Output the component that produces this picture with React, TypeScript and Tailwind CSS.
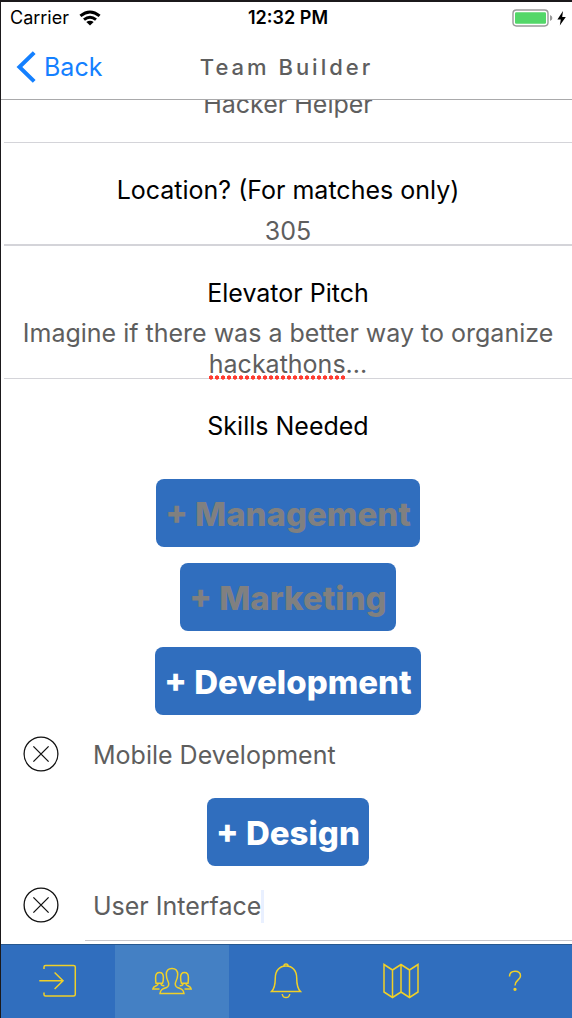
import { useState, type ReactNode } from "react";

const fieldText = "text-[25px] leading-[31px] text-[#5e5e5e]";

function Heading({ htmlFor, children }: { htmlFor?: string; children: ReactNode }) {
  const cls = "block text-center text-[25px] leading-[31px] text-black";
  return htmlFor ? (
    <label htmlFor={htmlFor} className={cls}>{children}</label>
  ) : (
    <h2 className={cls}>{children}</h2>
  );
}

function StatusBar() {
  return (
    <div className="grid h-8 grid-cols-3 items-center pr-1.5 pl-[9px] text-[18px] leading-5 text-black">
      <div className="flex items-center gap-2.5">
        <span>Carrier</span>
        <svg viewBox="0 0 22 16" className="h-4 w-[22px]" fill="none" stroke="#000" strokeWidth="3" aria-hidden="true">
          <path d="M1.4 5.9Q11 -1.9 20.6 5.9" />
          <path d="M5 9.6Q11 4.8 17 9.6" />
          <path d="M7.3 12.1Q11 9.2 14.7 12.1L11 15.6Z" fill="#000" stroke="none" />
        </svg>
      </div>
      <span className="text-center font-semibold">12:32 PM</span>
      <div className="flex items-center justify-end gap-1">
        <svg viewBox="0 0 41 18" className="h-[18px] w-[41px]" aria-hidden="true">
          <rect x="1" y="1" width="35" height="16" rx="3.4" fill="none" stroke="#9a9a9a" strokeWidth="1.4" />
          <rect x="3" y="3.2" width="31" height="11.6" rx="1.2" fill="#53d769" />
          <path d="M38 6Q40.4 7 40.4 9T38 12Z" fill="#9a9a9a" />
        </svg>
        <svg viewBox="0 0 9 15" className="h-[15px] w-[9px]" aria-hidden="true">
          <path d="M6 0L.4 8.4H3.8L2.8 14.6L8.8 6H5.2Z" fill="#000" />
        </svg>
      </div>
    </div>
  );
}

function NavBar() {
  return (
    <div className="grid h-[66px] grid-cols-[1fr_auto_1fr] items-center border-b border-[#a9a9ab] px-[15px]">
      <button type="button" className="flex items-center gap-2 justify-self-start text-[25px] leading-8 text-[#1480ff]">
        <svg viewBox="0 0 20 32" className="h-8 w-5" fill="none" stroke="currentColor" strokeWidth="4" aria-hidden="true">
          <path d="M18.2 1.6L3.4 16L18.2 30.4" />
        </svg>
        Back
      </button>
      <h1 className="text-[22px] leading-8 font-medium tracking-[3px] text-[#5e5e5e]">Team Builder</h1>
    </div>
  );
}

function SkillButton({ name, disabled }: { name: string; disabled?: boolean }) {
  return (
    <button
      type="button"
      disabled={disabled}
      className="h-[68px] self-center rounded-lg bg-[#306ebe] px-[9px] pt-0.5 text-[33px] leading-10 font-extrabold text-white disabled:text-[#808080]"
    >
      + {name}
    </button>
  );
}

function SkillRow({ value, caret }: { value: string; caret?: boolean }) {
  const [text, setText] = useState(value);
  return (
    <div className="mb-[5px] flex h-[46px] items-center gap-[34px] pl-[19px]">
      <button type="button" aria-label={"Remove " + value}>
        <svg viewBox="0 0 36 36" className="size-9" fill="none" stroke="#111" strokeWidth="1.3" aria-hidden="true">
          <circle cx="18" cy="18" r="16.9" />
          <path d="M10.4 10.4L25.6 25.6M25.6 10.4L10.4 25.6" />
        </svg>
      </button>
      <div className="flex flex-1 items-center pt-0.5">
        <input
          aria-label="Skill"
          value={text}
          onChange={(e) => setText(e.target.value)}
          className={"min-w-0 bg-transparent outline-none " + fieldText + (caret ? " field-sizing-content" : " w-full")}
        />
        {caret && <span className="h-[33px] w-[3px] bg-[#e9f0ff]" />}
      </div>
    </div>
  );
}

const tabs: { label: string; icon: ReactNode }[] = [
  {
    label: "Check in",
    icon: (
      <svg viewBox="0 0 38 34" className="h-[34px] w-[38px]">
        <path d="M5 5V3Q5 1.5 6.5 1.5H34.5Q36.3 1.5 36.3 3V30.5Q36.3 32 34.5 32H6.5Q5 32 5 30.5V28.5" />
        <path d="M.3 16.8H24M15.6 8.5L24 16.8L15.6 25" />
      </svg>
    ),
  },
  {
    label: "Teams",
    icon: (
      <svg viewBox="0 0 40 28" className="h-7 w-10">
        <path d="M20 1.5C16.4 1.5 14.3 4 14.3 7.5C14.3 10.5 15 12.5 16.3 15C17.2 17 16.8 19.5 14.5 20.5C10.8 22 8.7 22.2 8 26.5H32C31.3 22.2 29.2 22 25.5 20.5C23.2 19.5 22.8 17 23.7 15C25 12.5 25.7 10.5 25.7 7.5C25.7 4 23.6 1.5 20 1.5Z" />
        <path d="M10.5 16.2H4Q3.6 14 3.6 10.5C3.6 7.5 5 5.5 7.5 5.5S11.4 7.5 11.4 10.5Q11.4 14 10.5 16.2ZM6.2 16.5C6.2 19.5 1.2 18.5.8 22H7.5M9 16.5Q8.8 18.4 12.3 18.8" />
        <path d="M29.5 16.2H36Q36.4 14 36.4 10.5C36.4 7.5 35 5.5 32.5 5.5S28.6 7.5 28.6 10.5Q28.6 14 29.5 16.2ZM33.8 16.5C33.8 19.5 38.8 18.5 39.2 22H32.5M31 16.5Q31.2 18.4 27.7 18.8" />
      </svg>
    ),
  },
  {
    label: "Notifications",
    icon: (
      <svg viewBox="0 0 32 36" className="h-9 w-8">
        <path d="M1.5 28.6C4.5 25.5 5.3 22 5.3 15C5.3 7.5 9.5 3 16 3S26.7 7.5 26.7 15C26.7 22 27.5 25.5 30.5 28.6Z" />
        <path d="M14 3Q14 1 16 1T18 3M12.2 31Q12.8 34.6 16 34.6T19.8 31" />
      </svg>
    ),
  },
  {
    label: "Map",
    icon: (
      <svg viewBox="0 0 36 36" className="size-9">
        <path d="M1 1.5L9.5 7L18 1.5L26.5 7L35 1.5V29L26.5 34.5L18 29L9.5 34.5L1 29ZM9.5 7V34.5M18 1.5V29M26.5 7V34.5" />
      </svg>
    ),
  },
  {
    label: "Help",
    icon: (
      <svg viewBox="0 0 14 22" className="h-[22px] w-3.5">
        <path d="M1.5 6.5C1.5 3 3.5 1.2 7 1.2S12.5 3 12.5 6C12.5 10 7 10 7 15.5" />
        <circle cx="7" cy="19.3" r=".9" fill="currentColor" />
      </svg>
    ),
  },
];

function TabBar() {
  return (
    <nav className="grid h-[74px] grid-cols-5 border-t border-[#27588f] bg-[#306ebe]">
      {tabs.map((tab) => (
        <button
          key={tab.label}
          type="button"
          aria-label={tab.label}
          aria-current={tab.label === "Teams" ? "page" : undefined}
          className="flex items-center justify-center fill-none stroke-[#f0d028] stroke-[1.5] pb-0.5 text-[#f0d028] aria-[current=page]:bg-[#4480c4]"
        >
          {tab.icon}
        </button>
      ))}
    </nav>
  );
}

export default function App() {
  const [role, setRole] = useState("Hacker Helper");
  const [location, setLocation] = useState("305");
  const [pitch, setPitch] = useState("Imagine if there was a better way to organize hackathons...");

  return (
    <div className="flex h-screen flex-col border-t-2 border-l border-[#1b191b] bg-white font-[Inter,sans-serif]">
      <header>
        <StatusBar />
        <NavBar />
      </header>

      <main className="min-h-0 flex-1 overflow-hidden pl-[3px]">
        <div className="-mt-[11px] border-b border-[#d4d4d9] pb-[22px]">
          <input
            aria-label="Role"
            value={role}
            onChange={(e) => setRole(e.target.value)}
            className={"block w-full text-center outline-none " + fieldText}
          />
        </div>

        <section className="border-b-2 border-[#d4d4d9] pt-8">
          <Heading htmlFor="location">Location? (For matches only)</Heading>
          <input
            id="location"
            value={location}
            onChange={(e) => setLocation(e.target.value)}
            className={"mt-[9px] block h-[29px] w-full pt-1 text-center outline-none " + fieldText}
          />
        </section>

        <section className="border-b border-[#d4d4d9] pt-8">
          <Heading htmlFor="pitch">Elevator Pitch</Heading>
          <div className="relative mt-[9px]">
            <textarea
              id="pitch"
              rows={2}
              spellCheck={false}
              value={pitch}
              onChange={(e) => setPitch(e.target.value)}
              className={"block h-[60px] w-full resize-none overflow-hidden px-3 text-center outline-none " + fieldText}
            />
            {/* Spelling marks under the last line's first word */}
            <div aria-hidden="true" className="pointer-events-none absolute inset-x-0 -bottom-0.5 flex justify-center gap-[22px]">
              <span className="h-[5px] w-[138px] bg-[radial-gradient(circle,#ff3b30_1.8px,transparent_2.5px)] bg-[length:6px_5px] bg-repeat-x" />
              <span />
            </div>
          </div>
        </section>

        <section className="pt-8">
          <Heading>Skills Needed</Heading>
          <div className="mt-[37px] flex flex-col gap-4">
            <SkillButton name="Management" disabled />
            <SkillButton name="Marketing" disabled />
            <SkillButton name="Development" />
            <SkillRow value="Mobile Development" />
            <SkillButton name="Design" />
            <SkillRow value="User Interface" caret />
          </div>
          <hr className="mt-[7px] ml-[81px] border-[#c8c7cc]" />
        </section>
      </main>

      <TabBar />
    </div>
  );
}
